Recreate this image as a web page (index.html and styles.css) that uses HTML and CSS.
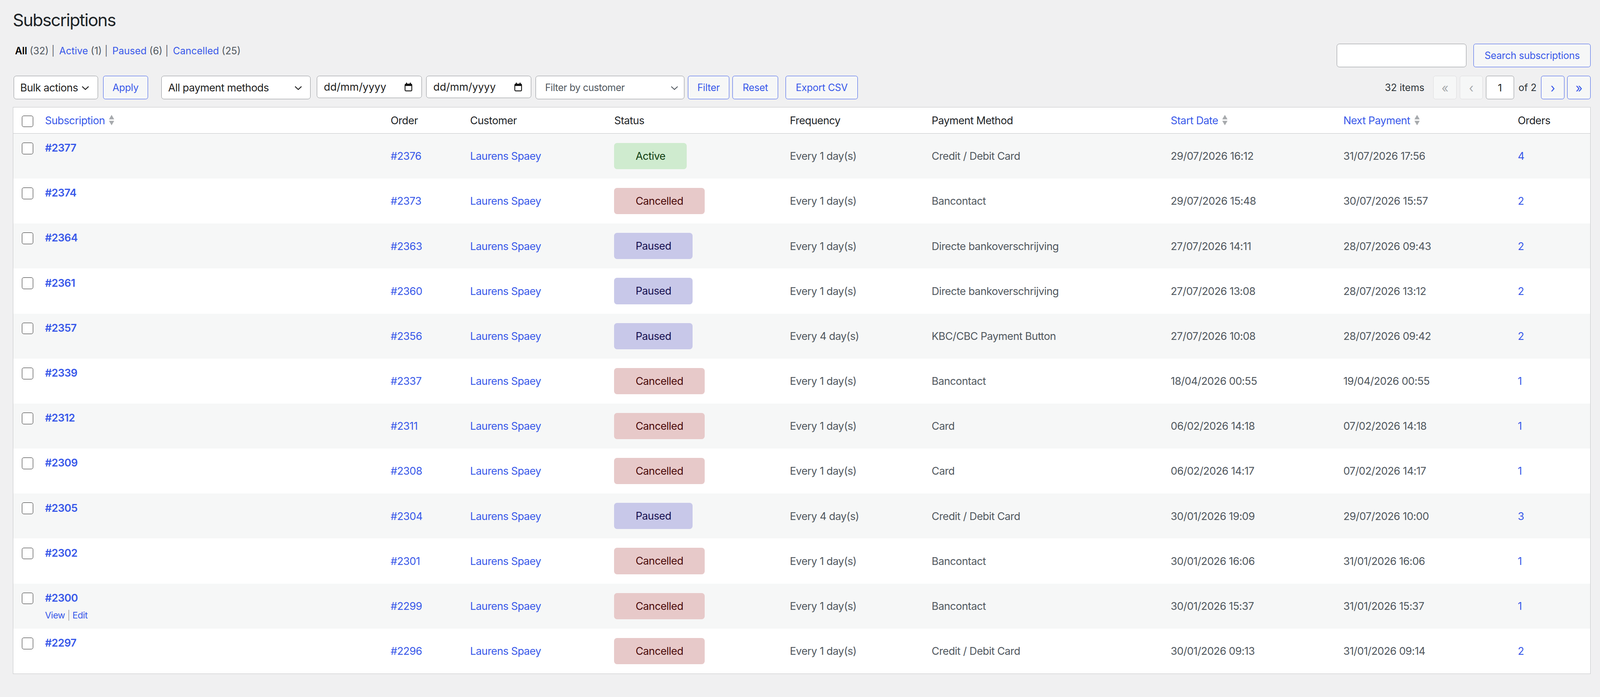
FILE: index.html
```html
<!DOCTYPE html>
<html lang="en">
<head>
  <meta charset="UTF-8">
  <meta name="viewport" content="width=device-width, initial-scale=1.0">
  <title>Subscriptions</title>
  <link rel="stylesheet" href="styles.css">
</head>
<body>
  <div class="wrap">
    <h1 class="page-title">Subscriptions</h1>

    <div class="top-row">
      <ul class="subsubsub">
        <li><a class="current">All <span class="count">(32)</span></a> |</li>
        <li><a href="#">Active <span class="count">(1)</span></a> |</li>
        <li><a href="#">Paused <span class="count">(6)</span></a> |</li>
        <li><a href="#">Cancelled <span class="count">(25)</span></a></li>
      </ul>
      <form class="search-box">
        <input type="search" class="search-input">
        <button type="button" class="button search-button">Search subscriptions</button>
      </form>
    </div>

    <div class="tablenav">
      <div class="actions">
        <div class="bulk-group">
          <span class="select select-bulk">
            <select><option>Bulk actions</option></select>
            <svg class="select-arrow" width="20" height="11" viewBox="0 0 20 11"><polyline points="1.5,1.5 10,9.5 18.5,1.5" fill="none" stroke="#1e1e1e" stroke-width="2.4"/></svg>
          </span>
          <button type="button" class="button">Apply</button>
        </div>
        <div class="filter-group">
          <span class="select select-method">
            <select><option>All payment methods</option></select>
            <svg class="select-arrow" width="20" height="11" viewBox="0 0 20 11"><polyline points="1.5,1.5 10,9.5 18.5,1.5" fill="none" stroke="#1e1e1e" stroke-width="2.4"/></svg>
          </span>
          <div class="date-input date-from">
            <span>dd/mm/yyyy</span>
            <svg width="22" height="24" viewBox="0 0 22 24"><rect x="2" y="4.5" width="18" height="18" rx="2.5" fill="none" stroke="#111" stroke-width="2.2"/><rect x="2" y="4.5" width="18" height="5" rx="1.5" fill="#111"/><rect x="4.5" y="0.5" width="3" height="6" rx="1" fill="#111"/><rect x="14.5" y="0.5" width="3" height="6" rx="1" fill="#111"/></svg>
          </div>
          <div class="date-input">
            <span>dd/mm/yyyy</span>
            <svg width="22" height="24" viewBox="0 0 22 24"><rect x="2" y="4.5" width="18" height="18" rx="2.5" fill="none" stroke="#111" stroke-width="2.2"/><rect x="2" y="4.5" width="18" height="5" rx="1.5" fill="#111"/><rect x="4.5" y="0.5" width="3" height="6" rx="1" fill="#111"/><rect x="14.5" y="0.5" width="3" height="6" rx="1" fill="#111"/></svg>
          </div>
          <span class="select select-customer">
            <select><option>Filter by customer</option></select>
            <svg class="select-arrow" width="20" height="11" viewBox="0 0 20 11"><polyline points="1.5,1.5 10,9.5 18.5,1.5" fill="none" stroke="#50575e" stroke-width="2.2"/></svg>
          </span>
          <button type="button" class="button filter-button">Filter</button>
          <button type="button" class="button reset-button">Reset</button>
          <button type="button" class="button export-button">Export CSV</button>
        </div>
      </div>

      <div class="pagination">
        <span class="displaying-num">32 items</span>
        <span class="page-button disabled">&laquo;</span>
        <span class="page-button disabled">&lsaquo;</span>
        <input type="text" class="current-page" value="1">
        <span class="total-pages">of 2</span>
        <a class="page-button" href="#">&rsaquo;</a>
        <a class="page-button" href="#">&raquo;</a>
      </div>
    </div>

    <table class="list-table">
      <colgroup>
        <col class="col-cb">
        <col class="col-subscription">
        <col class="col-order">
        <col class="col-customer">
        <col class="col-status">
        <col class="col-frequency">
        <col class="col-method">
        <col class="col-start">
        <col class="col-next">
        <col class="col-orders">
      </colgroup>
      <thead>
        <tr>
          <th class="check-column"><input type="checkbox" class="cb"></th>
          <th><a href="#" class="sortable">Subscription<svg class="sort-icon" width="16" height="30" viewBox="0 0 16 30"><polygon points="8,1 15,13 1,13" fill="#a7aaad"/><polygon points="1,17 15,17 8,29" fill="#a7aaad"/></svg></a></th>
          <th>Order</th>
          <th>Customer</th>
          <th>Status</th>
          <th>Frequency</th>
          <th>Payment Method</th>
          <th><a href="#" class="sortable">Start Date<svg class="sort-icon" width="16" height="30" viewBox="0 0 16 30"><polygon points="8,1 15,13 1,13" fill="#a7aaad"/><polygon points="1,17 15,17 8,29" fill="#a7aaad"/></svg></a></th>
          <th><a href="#" class="sortable">Next Payment<svg class="sort-icon" width="16" height="30" viewBox="0 0 16 30"><polygon points="8,1 15,13 1,13" fill="#a7aaad"/><polygon points="1,17 15,17 8,29" fill="#a7aaad"/></svg></a></th>
          <th>Orders</th>
        </tr>
      </thead>
      <tbody>
        <tr>
          <td class="check-column"><input type="checkbox" class="cb"></td>
          <td class="primary"><a href="#" class="row-title">#2377</a><div class="row-actions"><a href="#">View</a> | <a href="#">Edit</a></div></td>
          <td><a href="#">#2376</a></td>
          <td><a href="#">Laurens Spaey</a></td>
          <td><span class="status status-active">Active</span></td>
          <td>Every 1 day(s)</td>
          <td>Credit / Debit Card</td>
          <td>29/07/2026 16:12</td>
          <td>31/07/2026 17:56</td>
          <td><a href="#">4</a></td>
        </tr>
        <tr>
          <td class="check-column"><input type="checkbox" class="cb"></td>
          <td class="primary"><a href="#" class="row-title">#2374</a><div class="row-actions"><a href="#">View</a> | <a href="#">Edit</a></div></td>
          <td><a href="#">#2373</a></td>
          <td><a href="#">Laurens Spaey</a></td>
          <td><span class="status status-cancelled">Cancelled</span></td>
          <td>Every 1 day(s)</td>
          <td>Bancontact</td>
          <td>29/07/2026 15:48</td>
          <td>30/07/2026 15:57</td>
          <td><a href="#">2</a></td>
        </tr>
        <tr>
          <td class="check-column"><input type="checkbox" class="cb"></td>
          <td class="primary"><a href="#" class="row-title">#2364</a><div class="row-actions"><a href="#">View</a> | <a href="#">Edit</a></div></td>
          <td><a href="#">#2363</a></td>
          <td><a href="#">Laurens Spaey</a></td>
          <td><span class="status status-paused">Paused</span></td>
          <td>Every 1 day(s)</td>
          <td>Directe bankoverschrijving</td>
          <td>27/07/2026 14:11</td>
          <td>28/07/2026 09:43</td>
          <td><a href="#">2</a></td>
        </tr>
        <tr>
          <td class="check-column"><input type="checkbox" class="cb"></td>
          <td class="primary"><a href="#" class="row-title">#2361</a><div class="row-actions"><a href="#">View</a> | <a href="#">Edit</a></div></td>
          <td><a href="#">#2360</a></td>
          <td><a href="#">Laurens Spaey</a></td>
          <td><span class="status status-paused">Paused</span></td>
          <td>Every 1 day(s)</td>
          <td>Directe bankoverschrijving</td>
          <td>27/07/2026 13:08</td>
          <td>28/07/2026 13:12</td>
          <td><a href="#">2</a></td>
        </tr>
        <tr>
          <td class="check-column"><input type="checkbox" class="cb"></td>
          <td class="primary"><a href="#" class="row-title">#2357</a><div class="row-actions"><a href="#">View</a> | <a href="#">Edit</a></div></td>
          <td><a href="#">#2356</a></td>
          <td><a href="#">Laurens Spaey</a></td>
          <td><span class="status status-paused">Paused</span></td>
          <td>Every 4 day(s)</td>
          <td>KBC/CBC Payment Button</td>
          <td>27/07/2026 10:08</td>
          <td>28/07/2026 09:42</td>
          <td><a href="#">2</a></td>
        </tr>
        <tr>
          <td class="check-column"><input type="checkbox" class="cb"></td>
          <td class="primary"><a href="#" class="row-title">#2339</a><div class="row-actions"><a href="#">View</a> | <a href="#">Edit</a></div></td>
          <td><a href="#">#2337</a></td>
          <td><a href="#">Laurens Spaey</a></td>
          <td><span class="status status-cancelled">Cancelled</span></td>
          <td>Every 1 day(s)</td>
          <td>Bancontact</td>
          <td>18/04/2026 00:55</td>
          <td>19/04/2026 00:55</td>
          <td><a href="#">1</a></td>
        </tr>
        <tr>
          <td class="check-column"><input type="checkbox" class="cb"></td>
          <td class="primary"><a href="#" class="row-title">#2312</a><div class="row-actions"><a href="#">View</a> | <a href="#">Edit</a></div></td>
          <td><a href="#">#2311</a></td>
          <td><a href="#">Laurens Spaey</a></td>
          <td><span class="status status-cancelled">Cancelled</span></td>
          <td>Every 1 day(s)</td>
          <td>Card</td>
          <td>06/02/2026 14:18</td>
          <td>07/02/2026 14:18</td>
          <td><a href="#">1</a></td>
        </tr>
        <tr>
          <td class="check-column"><input type="checkbox" class="cb"></td>
          <td class="primary"><a href="#" class="row-title">#2309</a><div class="row-actions"><a href="#">View</a> | <a href="#">Edit</a></div></td>
          <td><a href="#">#2308</a></td>
          <td><a href="#">Laurens Spaey</a></td>
          <td><span class="status status-cancelled">Cancelled</span></td>
          <td>Every 1 day(s)</td>
          <td>Card</td>
          <td>06/02/2026 14:17</td>
          <td>07/02/2026 14:17</td>
          <td><a href="#">1</a></td>
        </tr>
        <tr>
          <td class="check-column"><input type="checkbox" class="cb"></td>
          <td class="primary"><a href="#" class="row-title">#2305</a><div class="row-actions"><a href="#">View</a> | <a href="#">Edit</a></div></td>
          <td><a href="#">#2304</a></td>
          <td><a href="#">Laurens Spaey</a></td>
          <td><span class="status status-paused">Paused</span></td>
          <td>Every 4 day(s)</td>
          <td>Credit / Debit Card</td>
          <td>30/01/2026 19:09</td>
          <td>29/07/2026 10:00</td>
          <td><a href="#">3</a></td>
        </tr>
        <tr>
          <td class="check-column"><input type="checkbox" class="cb"></td>
          <td class="primary"><a href="#" class="row-title">#2302</a><div class="row-actions"><a href="#">View</a> | <a href="#">Edit</a></div></td>
          <td><a href="#">#2301</a></td>
          <td><a href="#">Laurens Spaey</a></td>
          <td><span class="status status-cancelled">Cancelled</span></td>
          <td>Every 1 day(s)</td>
          <td>Bancontact</td>
          <td>30/01/2026 16:06</td>
          <td>31/01/2026 16:06</td>
          <td><a href="#">1</a></td>
        </tr>
        <tr class="is-hover">
          <td class="check-column"><input type="checkbox" class="cb"></td>
          <td class="primary"><a href="#" class="row-title">#2300</a><div class="row-actions"><a href="#">View</a> | <a href="#">Edit</a></div></td>
          <td><a href="#">#2299</a></td>
          <td><a href="#">Laurens Spaey</a></td>
          <td><span class="status status-cancelled">Cancelled</span></td>
          <td>Every 1 day(s)</td>
          <td>Bancontact</td>
          <td>30/01/2026 15:37</td>
          <td>31/01/2026 15:37</td>
          <td><a href="#">1</a></td>
        </tr>
        <tr>
          <td class="check-column"><input type="checkbox" class="cb"></td>
          <td class="primary"><a href="#" class="row-title">#2297</a><div class="row-actions"><a href="#">View</a> | <a href="#">Edit</a></div></td>
          <td><a href="#">#2296</a></td>
          <td><a href="#">Laurens Spaey</a></td>
          <td><span class="status status-cancelled">Cancelled</span></td>
          <td>Every 1 day(s)</td>
          <td>Credit / Debit Card</td>
          <td>30/01/2026 09:13</td>
          <td>31/01/2026 09:14</td>
          <td><a href="#">2</a></td>
        </tr>
      </tbody>
    </table>
  </div>
</body>
</html>
```

FILE: styles.css
```css
:root {
  --bg: #f0f0f1;
  --text: #1d2327;
  --muted: #50575e;
  --link: #3858e9;
  --border: #c3c4c7;
  --input-border: #8c8f94;
  --stripe: #f6f7f7;
}

* {
  box-sizing: border-box;
}

/* screen is 4266 device px over a 4096 css px viewport */
html {
  zoom: 0.96;
  height: 100%;
}

body {
  margin: 0;
  height: 100%;
  overflow: hidden;
  background: var(--bg);
  color: var(--text);
  font-family: Inter, "Noto Sans", sans-serif;
}

a {
  color: var(--link);
  text-decoration: none;
}

.wrap {
  padding: 0 25px 0 34px;
}

.page-title {
  margin: 0;
  padding-top: 24px;
  font-size: 46px;
  line-height: 60px;
  font-weight: 400;
  letter-spacing: -0.04em;
  color: var(--text);
}

/* status links + search */
.top-row {
  display: flex;
  justify-content: space-between;
  align-items: flex-start;
  margin-top: 33px;
}

.subsubsub {
  display: flex;
  gap: 12px;
  margin: 0;
  padding: 0 0 0 6px;
  list-style: none;
  font-size: 26px;
  line-height: 39px;
  color: #646970;
}

.subsubsub .current {
  color: #000;
  font-weight: 600;
}

.subsubsub .count {
  color: var(--muted);
  font-weight: 400;
}

.search-box {
  display: flex;
  gap: 19px;
  margin: 0;
}

.search-input {
  width: 346px;
  height: 62px;
  border: 2px solid var(--input-border);
  border-radius: 7px;
  background: #fff;
}

.button {
  height: 63px;
  padding: 0 24px;
  border: 2px solid var(--link);
  border-radius: 6px;
  background: var(--stripe);
  color: var(--link);
  font-family: inherit;
  font-size: 26px;
  letter-spacing: -0.01em;
  white-space: nowrap;
}

.search-button {
  height: 62px;
  width: 312px;
}

/* toolbar */
.tablenav {
  display: flex;
  justify-content: space-between;
  align-items: center;
  margin-top: 23px;
}

.actions,
.bulk-group,
.filter-group {
  display: flex;
  align-items: flex-start;
}

.actions {
  gap: 36px;
  padding-left: 2px;
}

.bulk-group {
  gap: 14px;
}

.filter-group {
  gap: 12px;
}

.filter-group .date-from {
  margin-left: 4px;
}

.filter-group .filter-button {
  margin-left: -3px;
}

.filter-group .reset-button {
  margin-left: -3px;
  padding: 0 26px;
}

.filter-group .export-button {
  margin-left: 8px;
  padding: 0 26px;
}

.select {
  position: relative;
  display: block;
}

.select select {
  appearance: none;
  -webkit-appearance: none;
  height: 63px;
  padding: 0 50px 0 17px;
  border: 2px solid var(--input-border);
  border-radius: 7px;
  background: #fff;
  color: #1e1e1e;
  font-family: inherit;
  font-size: 28px;
  letter-spacing: -0.02em;
}

.select-arrow {
  position: absolute;
  right: 23px;
  top: 27px;
  pointer-events: none;
}

.select-bulk select { width: 225px; }
.select-method select { width: 398px; }
.select-customer select {
  width: 397px;
  padding-left: 24px;
  color: var(--muted);
  font-size: 26px;
}
.select-customer .select-arrow { right: 17px; }

.date-input {
  display: flex;
  justify-content: space-between;
  align-items: center;
  width: 280px;
  height: 59px;
  padding: 0 23px 0 18px;
  border: 2px solid var(--input-border);
  border-radius: 7px;
  background: #fff;
  color: #1e1e1e;
  font-size: 28px;
}

/* pagination */
.pagination {
  display: flex;
  align-items: center;
  gap: 8px;
  font-size: 26px;
  color: #2c3338;
}

.displaying-num {
  margin-right: 16px;
}

.page-button {
  display: flex;
  align-items: center;
  justify-content: center;
  width: 62px;
  height: 63px;
  border: 2px solid var(--link);
  border-radius: 6px;
  background: var(--stripe);
  color: var(--link);
  font-size: 32px;
}

.page-button.disabled {
  border-color: #dcdcde;
  color: #a7aaad;
}

.current-page {
  width: 75px;
  height: 63px;
  border: 2px solid var(--input-border);
  border-radius: 6px;
  background: #fff;
  text-align: center;
  font-family: inherit;
  font-size: 27px;
  color: #1e1e1e;
}

.total-pages {
  margin: 0 4px;
}

/* table */
.list-table {
  width: 100%;
  margin-top: 20px;
  table-layout: fixed;
  border-collapse: separate;
  border-spacing: 0;
  border: 2px solid var(--border);
  background: #fff;
  font-size: 28px;
  line-height: 40px;
  letter-spacing: -0.02em;
}

.col-cb { width: 65px; }
.col-subscription { width: 921px; }
.col-order { width: 212px; }
.col-customer { width: 384px; }
.col-status { width: 468px; }
.col-frequency { width: 378px; }
.col-method { width: 637px; }
.col-start { width: 460px; }
.col-next { width: 465px; }
.col-orders { width: 213px; }

.list-table th {
  padding: 15px 20px 14px;
  border-bottom: 2px solid var(--border);
  text-align: left;
  font-weight: 400;
  color: var(--text);
  white-space: nowrap;
}

.sort-icon {
  margin-left: 10px;
  vertical-align: -4px;
}

.list-table td {
  padding: 0 20px;
  color: var(--muted);
  vertical-align: middle;
  white-space: nowrap;
}

.list-table tbody tr {
  height: 120px;
}

.list-table tbody tr:nth-child(odd) {
  background: var(--stripe);
}

.list-table .check-column {
  padding: 24px 0 0 23px;
  vertical-align: top;
}

.list-table th.check-column {
  padding-top: 22px;
}

.cb {
  appearance: none;
  -webkit-appearance: none;
  display: block;
  width: 31px;
  height: 31px;
  margin: 0;
  border: 2px solid #1e1e1e;
  border-radius: 5px;
  background: #fff;
}

.list-table td.primary {
  padding-top: 18px;
  vertical-align: top;
}

.row-title {
  font-weight: 600;
}

.row-actions {
  margin-top: 9px;
  font-size: 24px;
  line-height: 36px;
  color: #a7aaad;
  visibility: hidden;
}

.is-hover .row-actions {
  visibility: visible;
}

.status {
  display: block;
  width: fit-content;
  height: 70px;
  padding: 0 57px;
  border-radius: 8px;
  line-height: 70px;
}

.status-active {
  background: #cfebcf;
  color: #0f3d10;
}

.status-cancelled {
  background: #e7c9c9;
  color: #4a0808;
}

.status-paused {
  background: #c8c8e9;
  color: #160f4f;
}
```
